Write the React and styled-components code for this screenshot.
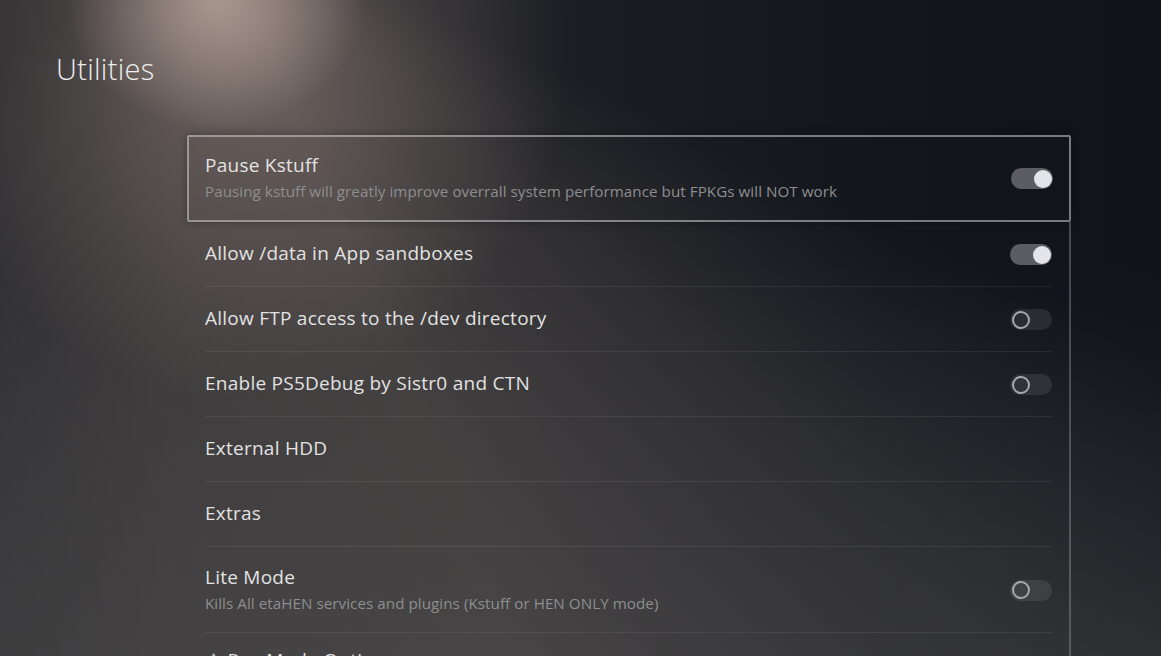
import React from "react";
import styled, { createGlobalStyle, css } from "styled-components";

const Global = createGlobalStyle`
  html, body { margin: 0; padding: 0; background: #13161d; }
  body { font-family: "Open Sans", "Noto Sans", sans-serif; }
  * { box-sizing: border-box; }
`;

const Page = styled.div`
  position: relative;
  width: 1161px;
  height: 656px;
  overflow: hidden;
  background:
    radial-gradient(ellipse 150px 130px at 215px 0px, rgba(190, 170, 160, 0.75), rgba(190, 170, 160, 0) 100%),
    radial-gradient(ellipse 330px 360px at 240px 40px, rgba(150, 132, 124, 0.55), rgba(150, 132, 124, 0) 100%),
    conic-gradient(from 0deg at 215px -90px,
      rgba(0,0,0,0) 0deg 115deg,
      rgba(120, 108, 102, 0.22) 133deg,
      rgba(140, 124, 116, 0.32) 158deg,
      rgba(125, 112, 106, 0.3) 185deg,
      rgba(85, 80, 80, 0.24) 210deg,
      rgba(0,0,0,0) 235deg 360deg),
    linear-gradient(180deg, rgba(0,0,0,0) 40%, rgba(55, 62, 66, 0.35) 100%),
    linear-gradient(90deg, #26272a 0%, #1d1f24 45%, #13161d 75%, #10131a 100%);
  color: #e8e8e8;
  display: flex;
  flex-direction: column;
`;

const Title = styled.h1`
  margin: 0;
  padding: 49px 0 0 56px;
  font-weight: 300;
  font-size: 29px;
  line-height: 40px;
  color: #eeeeee;
  letter-spacing: 0.3px;
`;

const List = styled.div`
  margin: 46px 0 0 187px;
  width: 884px;
  display: flex;
  flex-direction: column;
`;

const Row = styled.div`
  position: relative;
  display: flex;
  align-items: center;
  justify-content: space-between;
  padding: 0 17px 0 18px;
  height: ${(p) => p.$h}px;
  ${(p) =>
    p.$focused
      ? css`
          border: 2px solid rgba(205, 205, 210, 0.55);
          border-radius: 2px;
          padding-left: 16px;
          padding-right: 16px;
          box-shadow: 0 0 8px rgba(0, 0, 0, 0.35);
        `
      : css`
          border-right: 2px solid rgba(170, 172, 180, 0.35);
          &::after {
            content: "";
            position: absolute;
            left: 18px;
            right: 17px;
            bottom: 0;
            height: 1px;
            background: rgba(255, 255, 255, 0.07);
          }
        `}
`;

const Texts = styled.div`
  display: flex;
  flex-direction: column;
  gap: 4px;
  margin-top: -3px;
`;

const Label = styled.div`
  font-size: 19px;
  line-height: 24px;
  font-weight: 400;
  color: #e2e2e2;
  letter-spacing: 0.25px;
`;

const Desc = styled.div`
  font-size: 15.2px;
  line-height: 20px;
  color: #8d8e90;
  letter-spacing: 0.05px;
`;

const Track = styled.div`
  position: relative;
  width: 42px;
  height: 21px;
  border-radius: 11px;
  flex-shrink: 0;
  background: ${(p) => (p.$on ? "#5c5d62" : "rgba(255, 255, 255, 0.09)")};
`;

const Knob = styled.div`
  position: absolute;
  top: 1.5px;
  width: 18px;
  height: 18px;
  border-radius: 50%;
  ${(p) =>
    p.$on
      ? css`
          right: 1px;
          background: #e4e5ea;
        `
      : css`
          left: 2px;
          border: 2px solid #a7a8ad;
          background: transparent;
        `}
`;

const RedDot = styled.span`
  display: inline-block;
  width: 12px;
  height: 12px;
  border-radius: 50%;
  background: #e0102a;
  margin: 0 2px;
  vertical-align: -1px;
`;

const Toggle = ({ on }) => (
  <Track $on={on}>
    <Knob $on={on} />
  </Track>
);

const items = [
  {
    label: "Pause Kstuff",
    desc: "Pausing kstuff will greatly improve overrall system performance but FPKGs will NOT work",
    toggle: true,
    on: true,
    focused: true,
    h: 87,
  },
  { label: "Allow /data in App sandboxes", toggle: true, on: true, h: 65 },
  { label: "Allow FTP access to the /dev directory", toggle: true, on: false, h: 65 },
  { label: "Enable PS5Debug by Sistr0 and CTN", toggle: true, on: false, h: 65 },
  { label: "External HDD", h: 65 },
  { label: "Extras", h: 65 },
  {
    label: "Lite Mode",
    desc: "Kills All etaHEN services and plugins (Kstuff or HEN ONLY mode)",
    toggle: true,
    on: false,
    h: 86,
  },
];

export default function App() {
  return (
    <Page>
      <Global />
      <Title>Utilities</Title>
      <List>
        {items.map((it) => (
          <Row key={it.label} $focused={it.focused} $h={it.h}>
            <Texts>
              <Label>{it.label}</Label>
              {it.desc && <Desc>{it.desc}</Desc>}
            </Texts>
            {it.toggle && <Toggle on={it.on} />}
          </Row>
        ))}
        <Row $h={56}>
          <Texts>
            <Label>
              ⚠ Re<RedDot />Mode Options
            </Label>
          </Texts>
        </Row>
      </List>
    </Page>
  );
}
